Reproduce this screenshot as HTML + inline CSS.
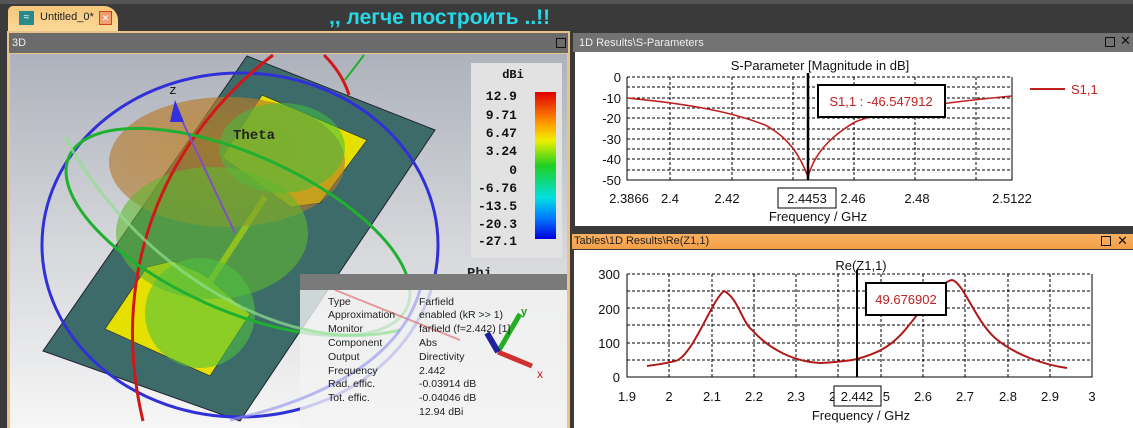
<!DOCTYPE html>
<html><head><meta charset="utf-8"><style>
body{margin:0;width:1133px;height:428px;overflow:hidden;background:#3a3a3a;font-family:"Liberation Sans","DejaVu Sans",sans-serif;position:relative}
.a{position:absolute}
.info div{position:absolute;font-size:10.5px;color:#222;white-space:nowrap}
</style></head><body>
<div class="a" style="left:0;top:0;width:1133px;height:4px;background:#555"></div>
<!-- tab -->
<div class="a" style="left:8px;top:6px;width:110px;height:26px;background:linear-gradient(#f6c77a,#fbd99a);border-radius:5px 14px 0 0"></div>
<div class="a" style="left:19px;top:11px;width:15px;height:14px;background:#2a8a8a;color:#fff;font-size:10px;line-height:14px;text-align:center">≈</div>
<div class="a" style="left:40px;top:11px;font-size:11px;color:#222">Untitled_0*</div>
<div class="a" style="left:99px;top:11px;width:11px;height:12px;background:#f0a070;border:1px solid #d04020;color:#fff;font-size:9px;line-height:12px;text-align:center">✕</div>
<div class="a" style="left:329px;top:6px;font-size:21px;font-weight:bold;color:#27d8e8">,, легче построить ..!!</div>
<!-- 3D panel -->
<div class="a" style="left:7px;top:31px;width:563px;height:397px;background:#e9c388"></div>
<div class="a" style="left:9px;top:33px;width:559px;height:20px;background:#6b6b6b"></div>
<div class="a" style="left:12px;top:37px;font-size:11px;color:#eee">3D</div>
<div class="a" style="left:556px;top:38px;width:8px;height:8px;border:1.5px solid #111"></div>
<svg class="a" style="left:10px;top:54px" width="557" height="374" viewBox="10 54 557 374">
<defs><linearGradient id="bg" x1="0" y1="0" x2="0" y2="1"><stop offset="0" stop-color="#aeb2bc"/><stop offset=".5" stop-color="#d4d6da"/><stop offset="1" stop-color="#f6f6f6"/></linearGradient>
<linearGradient id="cb" x1="0" y1="0" x2="0" y2="1"><stop offset="0" stop-color="#e00000"/><stop offset=".2" stop-color="#ff9000"/><stop offset=".33" stop-color="#f0f000"/><stop offset=".5" stop-color="#20d020"/><stop offset=".72" stop-color="#00e0e0"/><stop offset=".85" stop-color="#0080ff"/><stop offset="1" stop-color="#0000e0"/></linearGradient>
<radialGradient id="lob" cx=".5" cy=".4" r=".6"><stop offset="0" stop-color="#c08020" stop-opacity=".75"/><stop offset="1" stop-color="#b07830" stop-opacity=".6"/></radialGradient></defs>
<rect x="10" y="54" width="557" height="374" fill="url(#bg)"/>
<polygon points="247,56 435,130 240,421 43,351" fill="#3d6b69" stroke="#223" stroke-width="1"/>
<polygon points="262,95 367,140 320,203 291,207 222,157" fill="#e6e000" stroke="#333" stroke-width=".7"/>
<polygon points="147,267 173,261 203,274 250,314 210,376 105,329" fill="#e6e000" stroke="#333" stroke-width=".7"/>
<line x1="265" y1="197" x2="209" y2="283" stroke="#d8d000" stroke-width="6"/>
<ellipse cx="227" cy="162" rx="118" ry="65" fill="url(#lob)"/>
<ellipse cx="282" cy="148" rx="63" ry="45" fill="#40c040" opacity=".55"/>
<ellipse cx="212" cy="233" rx="96" ry="66" fill="#60b830" opacity=".6"/>
<ellipse cx="200" cy="313" rx="55" ry="55" fill="#50c040" opacity=".6"/>
<ellipse cx="240" cy="245" rx="198" ry="172" fill="none" stroke="#3030d8" stroke-width="3"/>
<path d="M273,55 C175,130 105,260 143,421" fill="none" stroke="#d01818" stroke-width="3"/>
<path d="M324,55 C337,68 345,82 349,95" fill="none" stroke="#d01818" stroke-width="3"/>
<ellipse cx="238" cy="232" rx="185" ry="78" transform="rotate(24 238 232)" fill="none" stroke="#20b030" stroke-width="3"/>
<line x1="364" y1="55" x2="345" y2="80" stroke="#20b030" stroke-width="2"/>
<line x1="235" y1="233" x2="177" y2="110" stroke="#8050c0" stroke-width="2"/>
<polygon points="175,100 184,122 170,122" fill="#3030e0"/>
<text x="169" y="94" font-family="Liberation Mono" font-size="13" fill="#111">z</text>
<text x="233" y="139" font-family="Liberation Mono" font-weight="bold" font-size="14" fill="#222">Theta</text>
<text x="467" y="277" font-family="Liberation Mono" font-weight="bold" font-size="14" fill="#222">Phi</text>
<rect x="471" y="63" width="91" height="195" fill="#e2e2e2"/>
<text x="513" y="78" font-family="Liberation Mono" font-weight="bold" font-size="12" text-anchor="middle" fill="#111">dBi</text>
<rect x="535" y="92" width="21" height="147" fill="url(#cb)"/>
<g font-family="Liberation Mono" font-weight="bold" font-size="13" fill="#111" text-anchor="end">
<text x="517" y="100">12.9</text><text x="517" y="119">9.71</text><text x="517" y="137">6.47</text><text x="517" y="155">3.24</text><text x="517" y="174">0</text><text x="517" y="192">-6.76</text><text x="517" y="210">-13.5</text><text x="517" y="228">-20.3</text><text x="517" y="245">-27.1</text></g>
<rect x="300" y="274" width="267" height="154" fill="#f2f2f2" opacity=".8"/>
<rect x="300" y="274" width="267" height="16" fill="#7a7a7a"/>
<line x1="335" y1="290" x2="460" y2="340" stroke="#e06060" stroke-width="2" opacity=".6"/>
<path d="M65,137 C130,260 280,360 400,330" fill="none" stroke="#90e090" stroke-width="3" opacity=".7"/>
<path d="M420,290 C400,360 320,400 230,420" fill="none" stroke="#9090f0" stroke-width="3" opacity=".6"/>
<line x1="498" y1="352" x2="520" y2="314" stroke="#20b020" stroke-width="5"/>
<line x1="498" y1="352" x2="532" y2="366" stroke="#d03030" stroke-width="5"/>
<line x1="498" y1="352" x2="487" y2="333" stroke="#2020a0" stroke-width="6"/>
<text x="537" y="378" font-size="12" fill="#d02020">x</text>
<text x="521" y="315" font-size="11" fill="#20a020" font-weight="bold">y</text>
</svg>
<div class="info">
<div style="left:328px;top:296px">Type</div><div style="left:419px;top:296px">Farfield</div>
<div style="left:328px;top:309px">Approximation</div><div style="left:419px;top:309px">enabled (kR &gt;&gt; 1)</div>
<div style="left:328px;top:323px">Monitor</div><div style="left:419px;top:323px">farfield (f=2.442) [1]</div>
<div style="left:328px;top:337px">Component</div><div style="left:419px;top:337px">Abs</div>
<div style="left:328px;top:351px">Output</div><div style="left:419px;top:351px">Directivity</div>
<div style="left:328px;top:365px">Frequency</div><div style="left:419px;top:365px">2.442</div>
<div style="left:328px;top:378px">Rad. effic.</div><div style="left:419px;top:378px">-0.03914 dB</div>
<div style="left:328px;top:392px">Tot. effic.</div><div style="left:419px;top:392px">-0.04046 dB</div>
<div style="left:419px;top:406px">12.94 dBi</div>
</div>
<!-- S param panel -->
<div class="a" style="left:573px;top:33px;width:560px;height:19px;background:#727272"></div>
<div class="a" style="left:579px;top:37px;font-size:11px;color:#eee">1D Results\S-Parameters</div>
<div class="a" style="left:1105px;top:37px;width:8px;height:8px;border:1.5px solid #111"></div>
<div class="a" style="left:1120px;top:33px;font-size:13px;color:#111">✕</div>
<svg class="a" style="left:575px;top:52px" width="558" height="174" viewBox="575 52 558 174">
<rect x="575" y="52" width="558" height="174" fill="#fff"/>
<g stroke="#000" stroke-dasharray="3,2" stroke-width="1">
<line x1="627" y1="87" x2="1012" y2="87"/><line x1="627" y1="98" x2="1012" y2="98"/><line x1="627" y1="108" x2="1012" y2="108"/><line x1="627" y1="118" x2="1012" y2="118"/><line x1="627" y1="129" x2="1012" y2="129"/><line x1="627" y1="139" x2="1012" y2="139"/><line x1="627" y1="149" x2="1012" y2="149"/><line x1="627" y1="159" x2="1012" y2="159"/><line x1="627" y1="170" x2="1012" y2="170"/><line x1="627" y1="77" x2="1012" y2="77"/>
<line x1="670" y1="77" x2="670" y2="180"/><line x1="732" y1="77" x2="732" y2="180"/><line x1="793" y1="77" x2="793" y2="180"/><line x1="854" y1="77" x2="854" y2="180"/><line x1="915" y1="77" x2="915" y2="180"/><line x1="976" y1="77" x2="976" y2="180"/></g>
<polyline points="627,77 627,180 1012,180 1012,77" fill="none" stroke="#000"/>
<path d="M627,98 C690,104 732,112 765,125 C788,137 800,155 808,177 C814,155 828,138 855,122 C885,110 950,102 1012,96" fill="none" stroke="#c02020" stroke-width="1.6"/>
<line x1="808" y1="73" x2="808" y2="180" stroke="#000" stroke-width="2.5"/>
<rect x="818" y="85" width="127" height="32" fill="#fff" stroke="#000" stroke-width="2"/>
<text x="881" y="106" font-size="13" fill="#c02020" text-anchor="middle">S1,1 : -46.547912</text>
<line x1="1030" y1="89" x2="1065" y2="89" stroke="#c02020" stroke-width="2"/>
<text x="1071" y="94" font-size="13" fill="#c02020">S1,1</text>
<text x="820" y="70" font-size="13" text-anchor="middle" fill="#111">S-Parameter [Magnitude in dB]</text>
<g font-size="13" fill="#111" text-anchor="end"><text x="621" y="82">0</text><text x="621" y="103">-10</text><text x="621" y="123">-20</text><text x="621" y="144">-30</text><text x="621" y="164">-40</text><text x="621" y="185">-50</text></g>
<g font-size="13" fill="#111" text-anchor="middle"><text x="629" y="203">2.3866</text><text x="670" y="203">2.4</text><text x="727" y="203">2.42</text><text x="853" y="203">2.46</text><text x="917" y="203">2.48</text><text x="1012" y="203">2.5122</text></g>
<rect x="778" y="188" width="58" height="20" fill="#fff" stroke="#000"/>
<text x="807" y="203" font-size="13" text-anchor="middle" fill="#111">2.4453</text>
<text x="818" y="221" font-size="13" text-anchor="middle" fill="#111">Frequency / GHz</text>
</svg>
<!-- Z panel -->
<div class="a" style="left:572px;top:234px;width:561px;height:15px;background:linear-gradient(#f8b060,#f4a048)"></div>
<div class="a" style="left:574px;top:235px;font-size:11px;color:#222">Tables\1D Results\Re(Z1,1)</div>
<div class="a" style="left:1101px;top:236px;width:8px;height:8px;border:1.5px solid #111"></div>
<div class="a" style="left:1117px;top:233px;font-size:13px;color:#111">✕</div>
<svg class="a" style="left:574px;top:250px" width="559" height="178" viewBox="574 250 559 178">
<rect x="574" y="250" width="559" height="178" fill="#fff"/>
<g stroke="#000" stroke-dasharray="3,2" stroke-width="1">
<line x1="627" y1="274" x2="1092" y2="274"/><line x1="627" y1="291" x2="1092" y2="291"/><line x1="627" y1="308" x2="1092" y2="308"/><line x1="627" y1="325" x2="1092" y2="325"/><line x1="627" y1="343" x2="1092" y2="343"/><line x1="627" y1="360" x2="1092" y2="360"/>
<line x1="669" y1="274" x2="669" y2="377"/><line x1="712" y1="274" x2="712" y2="377"/><line x1="754" y1="274" x2="754" y2="377"/><line x1="796" y1="274" x2="796" y2="377"/><line x1="838" y1="274" x2="838" y2="377"/><line x1="881" y1="274" x2="881" y2="377"/><line x1="923" y1="274" x2="923" y2="377"/><line x1="965" y1="274" x2="965" y2="377"/><line x1="1008" y1="274" x2="1008" y2="377"/><line x1="1050" y1="274" x2="1050" y2="377"/></g>
<polyline points="627,274 627,377 1092,377 1092,274" fill="none" stroke="#000"/>
<path d="M647,366 C660,364 671,363 678,360 C695,350 712,300 724,291 C738,298 742,322 752,330 C770,350 795,362 821,363 C838,362 848,361 857,359 C875,354 890,348 905,330 C922,310 940,282 952,280 C963,282 975,320 995,338 C1015,355 1045,365 1067,368" fill="none" stroke="#b01818" stroke-width="2"/>
<line x1="857" y1="270" x2="857" y2="377" stroke="#000" stroke-width="2"/>
<rect x="866" y="283" width="80" height="32" fill="#fff" stroke="#000" stroke-width="2"/>
<text x="906" y="304" font-size="13" fill="#c02020" text-anchor="middle">49.676902</text>
<text x="861" y="270" font-size="13" text-anchor="middle" fill="#111">Re(Z1,1)</text>
<g font-size="13" fill="#111" text-anchor="end"><text x="620" y="279">300</text><text x="620" y="314">200</text><text x="620" y="348">100</text><text x="620" y="382">0</text></g>
<g font-size="13" fill="#111" text-anchor="middle"><text x="627" y="401">1.9</text><text x="669" y="401">2</text><text x="712" y="401">2.1</text><text x="754" y="401">2.2</text><text x="796" y="401">2.3</text><text x="838" y="401">2.4</text><text x="881" y="401">2.5</text><text x="923" y="401">2.6</text><text x="965" y="401">2.7</text><text x="1008" y="401">2.8</text><text x="1050" y="401">2.9</text><text x="1092" y="401">3</text></g>
<rect x="834" y="386" width="47" height="20" fill="#fff" stroke="#000"/>
<text x="857" y="401" font-size="13" text-anchor="middle" fill="#111">2.442</text>
<text x="861" y="420" font-size="13" text-anchor="middle" fill="#111">Frequency / GHz</text>
</svg>
</body></html>
